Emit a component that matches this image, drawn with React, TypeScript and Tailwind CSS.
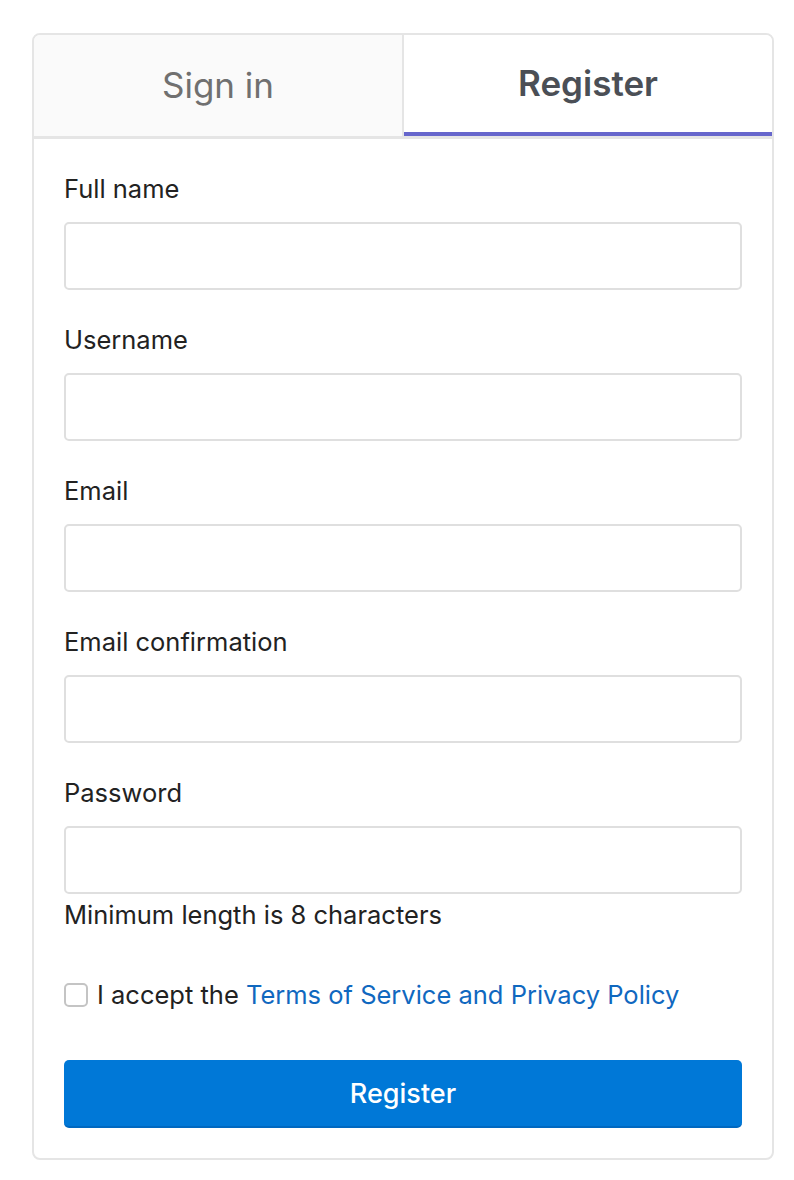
import React from 'react';

const fields = ['Full name', 'Username', 'Email', 'Email confirmation', 'Password'];

export default function App() {
  return (
    <div className="min-h-[1180px] bg-white pt-[33px] pl-[32px]" style={{ fontFamily: 'Inter, "Noto Sans", sans-serif' }}>
      <div className="w-[742px] border-2 border-[#e5e5e5] rounded-[8px] overflow-hidden">
        <div className="flex h-[101px]">
          <div className="flex-1 flex items-center justify-center bg-[#fafafa] border-r-2 border-[#e5e5e5] text-[35px] text-[#707070]">
            Sign in
          </div>
          <div className="flex-1 flex items-center justify-center bg-white border-b-4 border-[#6666cc] text-[35px] font-semibold text-[#4b4f56]">
            Register
          </div>
        </div>
        <div className="border-t-[3px] border-[#e5e5e5] px-[30px] pt-[32px] pb-[30px]">
          {fields.map((label, i) => (
            <div key={label} className={i < fields.length - 1 ? 'mb-[32px]' : ''}>
              <label className="block text-[25.5px] leading-[36px] text-[#222] mb-[15px]">{label}</label>
              <input
                type={label === 'Password' ? 'password' : 'text'}
                className="block w-full h-[68px] border-2 border-[#dfdfdf] rounded-[5px] px-4 text-[24px] outline-none"
              />
            </div>
          ))}
          <p className="mt-[3px] text-[25.5px] leading-[36px] text-[#222]">Minimum length is 8 characters</p>
          <label className="mt-[44px] flex items-center gap-[9px] text-[25.5px] leading-[36px] text-[#222]">
            <span className="w-[24px] h-[24px] rounded-[5px] border-2 border-[#c4c4c4] bg-white shrink-0" />
            <span>
              I accept the <a className="text-[#1068bf]">Terms of Service and Privacy Policy</a>
            </span>
          </label>
          <button className="mt-[47px] w-full h-[68px] pt-[3px] rounded-[5px] bg-[#0078d7] border-b-2 border-[#0068c0] text-white text-[27px] font-medium">
            Register
          </button>
        </div>
      </div>
    </div>
  );
}
